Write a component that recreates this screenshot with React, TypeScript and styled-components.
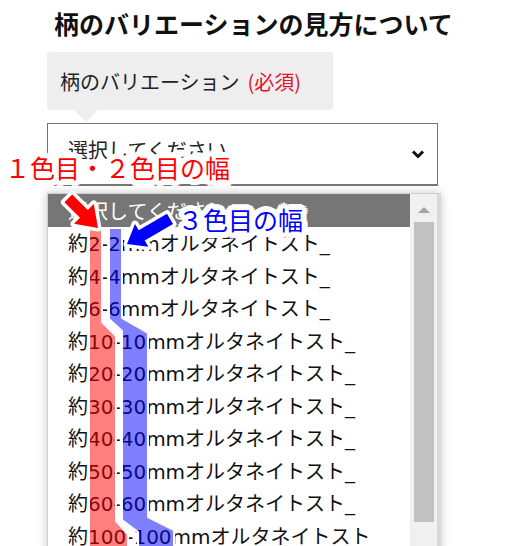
import styled, { createGlobalStyle } from "styled-components";

const GlobalStyle = createGlobalStyle`
  html, body {
    margin: 0;
    padding: 0;
    overflow: hidden;
    background: #fff;
  }
  body {
    font-family: "Noto Sans CJK JP", "Noto Sans", sans-serif;
    color: #111;
  }
`;

// white outline round the annotation texts
const halo = (r: number) => {
  const parts: string[] = [];
  for (let i = 0; i < 16; i++) {
    const a = (i / 16) * Math.PI * 2;
    parts.push(
      `${(Math.cos(a) * r).toFixed(1)}px ${(Math.sin(a) * r).toFixed(1)}px 0 #fff`
    );
    parts.push(
      `${(Math.cos(a) * (r - 2)).toFixed(1)}px ${(Math.sin(a) * (r - 2)).toFixed(1)}px 0 #fff`
    );
  }
  return parts.join(", ");
};

const Page = styled.div`
  position: relative;
  width: 507px;
  height: 546px;
  overflow: hidden;
`;

const Title = styled.h1`
  margin: 0;
  padding-top: 8px;
  font-size: 25px;
  line-height: 30px;
  font-weight: 700;
  text-align: center;
  color: #111;
`;

const Field = styled.div`
  margin: 14px 0 0 47px;
  width: 391px;
`;

const LabelBubble = styled.div`
  position: relative;
  width: 286px;
  height: 58px;
  box-sizing: border-box;
  padding-left: 13px;
  display: flex;
  align-items: center;
  background: #eeeeee;
  border-radius: 3px;
  font-size: 20px;
  color: #222;

  &::after {
    content: "";
    position: absolute;
    left: 27px;
    bottom: -12px;
    border-left: 12px solid transparent;
    border-right: 12px solid transparent;
    border-top: 12px solid #eeeeee;
  }
`;

const Required = styled.span`
  margin-left: 8px;
  color: #e8112d;
`;

const SelectBox = styled.div`
  margin-top: 13px;
  height: 63px;
  box-sizing: border-box;
  border: 1px solid #767676;
  border-bottom-width: 2px;
  padding: 0 12px 0 20px;
  display: flex;
  align-items: center;
  justify-content: space-between;
  font-size: 20px;
  color: #222;
`;

const SelectText = styled.span`
  margin-bottom: 10px;
`;

const Dropdown = styled.div`
  margin-top: 7px;
  width: 394px;
  height: 360px;
  box-sizing: border-box;
  border: 1px solid #d0d0d0;
  border-right: 4px solid #d9d9d9;
  box-shadow: 0 0 9px rgba(0, 0, 0, 0.22);
  display: grid;
  grid-template-columns: 1fr 27px;
  background: #fff;
`;

const OptionList = styled.ul`
  list-style: none;
  margin: 0;
  padding: 0;
`;

const Option = styled.li<{ $selected?: boolean }>`
  height: 32.5px;
  padding-left: 20px;
  display: flex;
  align-items: center;
  font-family: "DejaVu Sans", "Noto Sans CJK JP", sans-serif;
  font-size: 20px;
  white-space: nowrap;
  background: ${(p) => (p.$selected ? "#767676" : "transparent")};
  color: ${(p) => (p.$selected ? "#fff" : "#111")};
`;

const ScrollTrack = styled.div`
  background: #f0f0f0;
  display: flex;
  flex-direction: column;
  align-items: center;
`;

const ScrollArrow = styled.div`
  margin-top: 13px;
  width: 0;
  height: 0;
  border-left: 6px solid transparent;
  border-right: 6px solid transparent;
  border-bottom: 6px solid #a3a3a3;
`;

const ScrollThumb = styled.div`
  margin-top: 9px;
  width: 20px;
  height: 300px;
  background: #c1c1c1;
`;

const Note = styled.span<{ $color: string; $left: number; $top: number }>`
  position: absolute;
  left: ${(p) => p.$left}px;
  top: ${(p) => p.$top}px;
  font-size: 25px;
  line-height: 30px;
  white-space: nowrap;
  color: ${(p) => p.$color};
  text-shadow: ${halo(6)};
`;

const Overlay = styled.svg`
  position: absolute;
  left: 0;
  top: 0;
  pointer-events: none;
`;

const options = ["2", "4", "6", "10", "20", "30", "40", "50", "60", "100"];

function Chevron() {
  return (
    <svg width="14" height="10" viewBox="0 0 14 10">
      <path
        d="M2 2.5 L7 7.5 L12 2.5"
        fill="none"
        stroke="#111"
        strokeWidth="3"
        strokeLinecap="butt"
        strokeLinejoin="miter"
      />
    </svg>
  );
}

export default function App() {
  return (
    <Page>
      <GlobalStyle />
      <Title>柄のバリエーションの見方について</Title>
      <Field>
        <LabelBubble>
          柄のバリエーション<Required>(必須)</Required>
        </LabelBubble>
        <SelectBox>
          <SelectText>選択してください</SelectText>
          <Chevron />
        </SelectBox>
        <Dropdown>
          <OptionList>
            <Option $selected>選択してください</Option>
            {options.map((n) => (
              <Option key={n}>
                約{n}-{n}mmオルタネイトスト_
              </Option>
            ))}
          </OptionList>
          <ScrollTrack>
            <ScrollArrow />
            <ScrollThumb />
          </ScrollTrack>
        </Dropdown>
      </Field>

      <Overlay width="507" height="546" viewBox="0 0 507 546">
        <polygon
          points="89,228 102,228 102,322 116,336 116,521 128,534 128,560 89,560"
          fill="rgba(255,0,0,0.5)"
          stroke="#fff"
          strokeWidth="2"
          strokeLinejoin="round"
        />
        <polygon
          points="109,228 122,228 122,318 148,333 148,517 174,530 174,560 138,560 138,532 122,520 122,331 109,319"
          fill="rgba(0,0,255,0.5)"
          stroke="#fff"
          strokeWidth="2"
          strokeLinejoin="round"
        />
        <polygon
          points="72.2,194.4 87.8,210 93.8,204 98,228 74,223.8 80,217.8 64.4,202.2"
          fill="#ff0000"
          stroke="#fff"
          strokeWidth="7"
          strokeLinejoin="round"
          paintOrder="stroke"
        />
      </Overlay>

      <Note $color="#ff0000" $left={5} $top={152}>
        １色目・２色目の幅
      </Note>

      <Overlay width="507" height="546" viewBox="0 0 507 546">
        <polygon
          points="127,244 135,224 138.7,230.3 167,213.7 173,223.9 144.7,240.5 148.4,246.8"
          fill="#0000ff"
          stroke="#fff"
          strokeWidth="7"
          strokeLinejoin="round"
          paintOrder="stroke"
        />
      </Overlay>

      <Note $color="#0000ff" $left={178} $top={204}>
        ３色目の幅
      </Note>
    </Page>
  );
}
